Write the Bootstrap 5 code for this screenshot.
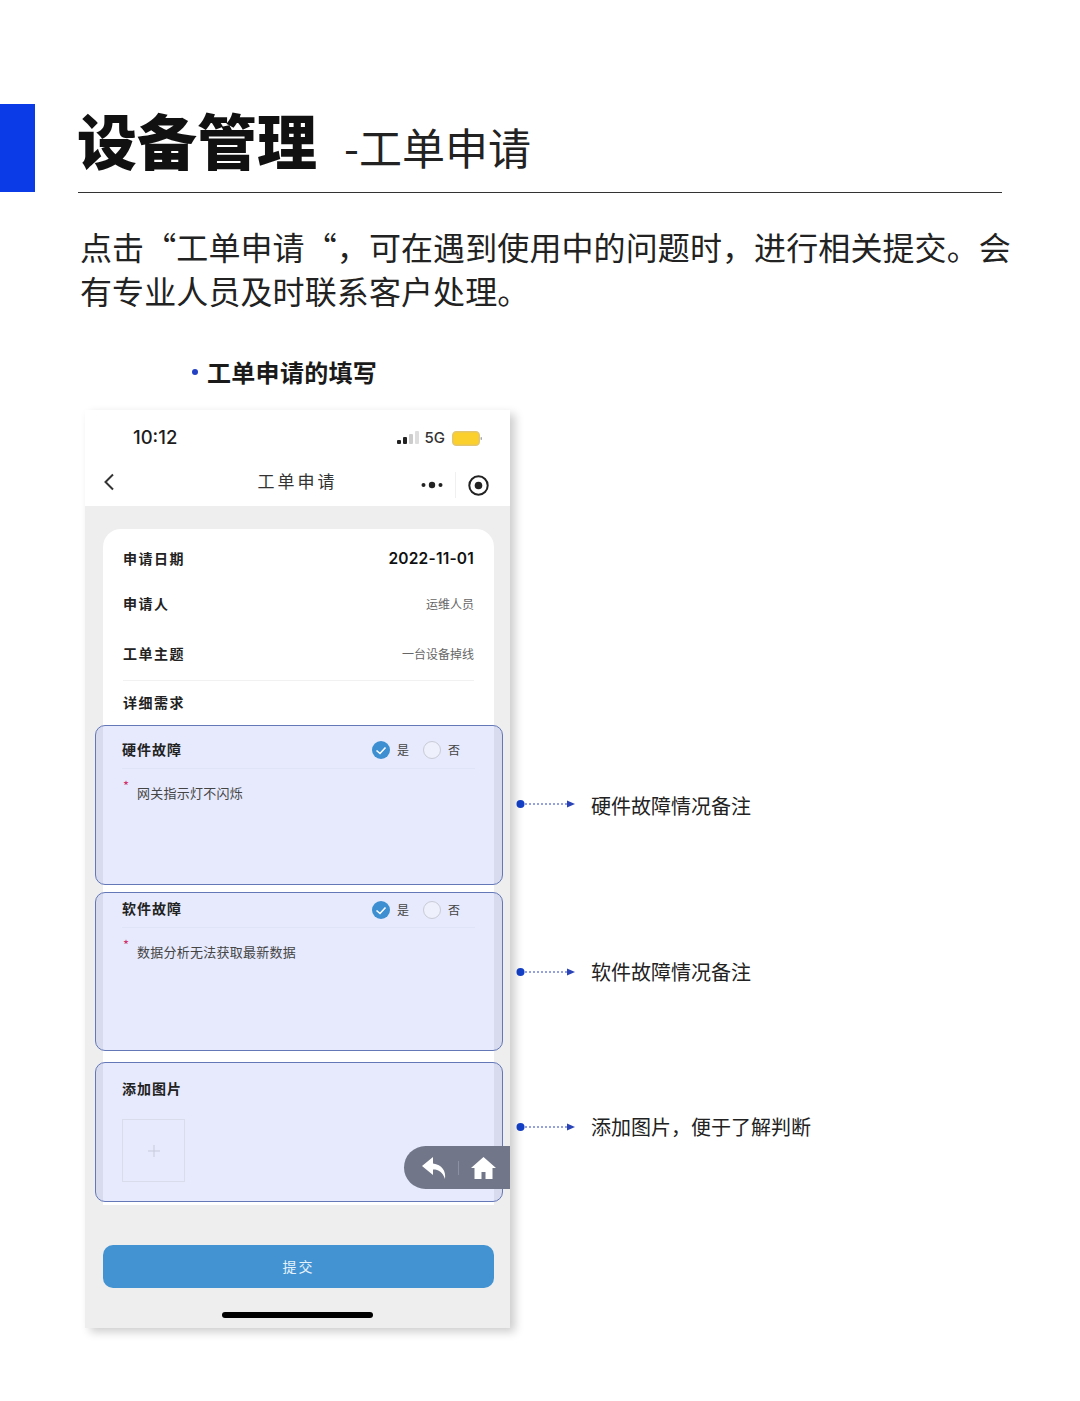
<!DOCTYPE html>
<html lang="zh-CN">
<head>
    <meta charset="UTF-8">
    <meta name="viewport" content="width=device-width, initial-scale=1.0">
    <title>设备管理 - 工单申请</title>
    <link href="https://cdn.jsdelivr.net/npm/bootstrap@5.3.0/dist/css/bootstrap.min.css" rel="stylesheet">
    <script src="https://cdn.jsdelivr.net/npm/bootstrap@5.3.0/dist/js/bootstrap.bundle.min.js"></script>
    <style>
        body { background: #fff; color: #1c1c1c; font-family: "Noto Sans CJK SC", "Liberation Sans", sans-serif; min-height: 1401px; }
        .slide { padding-top: 104px; padding-bottom: 73px; }
        .side-bar { width: 35px; height: 88px; background: #0a3be6; flex: none; }
        .title-row { width: 924px; margin-left: 43px; height: 89px; border-bottom: 1px solid #333; line-height: 70px; }
        .title-main { font-size: 60px; font-weight: 900; color: #111; margin-left: -1px; margin-right: 27px; }
        .title-sub { font-size: 43px; color: #222; }
        .intro { margin: 31px 0 0 80px; font-size: 32px; letter-spacing: .1px; line-height: 44px; white-space: nowrap; color: #222; }
        .fill-head { margin: 42px 0 0 192px; height: 36px; font-size: 24px; font-weight: 700; letter-spacing: .3px; line-height: 36px; color: #1a1a1a; }
        .fill-dot { width: 6px; height: 6px; background: #2441c4; margin-right: 9px; }
        .main-row { margin: 20px 0 0 85px; }

        .phone { width: 425px; height: 918px; background: #eee; box-shadow: 5px 4px 9px rgba(0,0,0,.2); flex: none; }
        .phone-top { background: #fff; height: 96px; }
        .status-row { height: 56px; padding: 0 28px 0 48px; }
        .status-time { font-family: Inter, "Liberation Sans", sans-serif; font-size: 18.5px; font-weight: 500; }
        .status-net { font-family: Inter, "Liberation Sans", sans-serif; font-size: 15px; font-weight: 500; color: #333; margin: 0 7px 0 6px; }
        .nav-row { display: grid; grid-template-columns: 1fr auto 1fr; height: 40px; }
        .nav-back { padding: 7px 0 0 18px; }
        .nav-title { font-size: 17px; line-height: 30px; letter-spacing: 3px; color: #333; }
        .nav-tools { padding: 0 21px 2px 0; }
        .nav-sep { width: 1px; height: 26px; background: #f0f0f0; margin: 0 12px; }

        .form-sheet { margin: 23px 16px 0 18px; background: #fff; border-radius: 18px 18px 0 0; padding: 7px 20px 3px; }
        .sheet-row { font-size: 14px; font-weight: 700; letter-spacing: 1.5px; color: #222; }
        .row-date { height: 44px; }
        .row-person { height: 46px; }
        .row-topic { height: 55px; border-bottom: 1px solid #f1f1f1; }
        .row-detail { height: 44px; padding-bottom: 2px; }
        .sheet-date { font-family: Inter, "Liberation Sans", sans-serif; font-size: 15.5px; letter-spacing: .2px; font-weight: 600; color: #111; margin-top: 2px; }
        .sheet-value { font-size: 12px; font-weight: 400; letter-spacing: 0; color: #666; margin-top: 2px; }

        .mark-box { margin: 0 -29px 0 -28px; padding: 0 27px 0 26px; border: 1.5px solid #6478b8; border-radius: 10px; background: rgba(100,125,235,.16); }
        .box-one { height: 160px; margin-bottom: 7px; }
        .box-two { height: 159px; margin-bottom: 11px; }
        .box-three { height: 140px; }
        .box-head { border-bottom: 1px solid #dfe4f6; font-size: 14px; font-weight: 700; letter-spacing: 1px; color: #222; }
        .box-one .box-head { height: 43px; padding-top: 5px; }
        .box-two .box-head { height: 35px; padding-bottom: 3px; }
        .choice-group { padding-right: 15px; font-size: 12px; font-weight: 400; letter-spacing: 0; color: #444; }
        .box-two .choice-group { margin-top: 3px; }
        .choice-off { width: 18px; height: 18px; border: 1px solid #c9ccd6; background: #eef0fb; margin-left: 14px; }
        .choice-label { margin-left: 7px; }
        .note-line { padding: 12px 0 0 15px; font-size: 13px; letter-spacing: .25px; line-height: 24px; color: #444; }
        .note-star { left: 1px; top: 9px; color: #d0306a; font-size: 13px; line-height: 16px; }
        .pic-title { height: 56px; padding-top: 13px; font-size: 14px; font-weight: 700; letter-spacing: 1px; line-height: 24px; color: #222; }
        .pic-slot { width: 63px; height: 63px; border: 1px solid #d9dcea; }

        .submit-btn { margin: 40px 16px 0 18px; width: 391px; height: 43px; background: #4393d3; border-radius: 10px; color: #e6f2fb; font-size: 14px; letter-spacing: 2px; border: 0; }
        .home-bar { width: 151px; height: 6px; background: #000; margin: 24px auto 0; }
        .float-pill { right: 0; top: 736px; width: 106px; height: 43px; background: #717689; border-radius: 22px 0 0 22px; padding-left: 17px; }
        .pill-sep { width: 1px; height: 14px; background: #8b90a2; margin: 0 12px 0 11px; }

        .note-col { padding-top: 381px; padding-left: 6px; }
        .anno-row { height: 30px; font-size: 20px; line-height: 30px; color: #222; }
        .anno-row svg { margin-right: 16px; }
        .anno-one svg { margin-top: -5px; }
        .anno-two { margin-top: 136px; }
        .anno-three { margin-top: 125px; }
    </style>
</head>
<body>
    <div class="slide">
        <!-- Header -->
        <div class="d-flex">
            <div class="side-bar"></div>
            <div class="title-row d-flex align-items-baseline">
                <span class="title-main">设备管理</span>
                <span class="title-sub">-工单申请</span>
            </div>
        </div>
        <p class="intro">点击“工单申请“，可在遇到使用中的问题时，进行相关提交。会<br>有专业人员及时联系客户处理。</p>
        <div class="fill-head d-flex align-items-center">
            <span class="fill-dot rounded-circle"></span>工单申请的填写
        </div>

        <div class="main-row d-flex">
            <!-- Phone -->
            <div class="phone position-relative">
                <div class="phone-top">
                    <div class="status-row d-flex align-items-center justify-content-between">
                        <span class="status-time">10:12</span>
                        <span class="d-flex align-items-center">
                            <svg width="22" height="14" viewBox="0 0 22 14">
                                <rect x="0" y="9" width="4" height="4" rx="1" fill="#222"/>
                                <rect x="6" y="6" width="4" height="7" rx="1" fill="#222"/>
                                <rect x="12" y="3" width="4" height="10" rx="1" fill="#ccc"/>
                                <rect x="18" y="0" width="4" height="13" rx="1" fill="#ddd"/>
                            </svg>
                            <span class="status-net">5G</span>
                            <svg width="30" height="15" viewBox="0 0 30 15">
                                <rect x=".75" y=".75" width="26.5" height="13.5" rx="3.5" fill="#fbd02c" stroke="#e3c66f" stroke-width="1.5"/>
                                <rect x="28.5" y="6" width="1.5" height="3" rx=".7" fill="#aaa"/>
                            </svg>
                        </span>
                    </div>
                    <div class="nav-row">
                        <div class="nav-back">
                            <svg class="d-block" width="12" height="18" viewBox="0 0 12 18"><path d="M10 1.5 2.5 9l7.5 7.5" fill="none" stroke="#333" stroke-width="2"/></svg>
                        </div>
                        <div class="nav-title">工单申请</div>
                        <div class="nav-tools d-flex justify-content-end align-items-center">
                            <svg width="22" height="8" viewBox="0 0 22 8">
                                <circle cx="2.5" cy="4" r="2" fill="#222"/>
                                <circle cx="11" cy="4" r="3.2" fill="#222"/>
                                <circle cx="19.5" cy="4" r="2" fill="#222"/>
                            </svg>
                            <span class="nav-sep"></span>
                            <svg width="21" height="21" viewBox="0 0 21 21">
                                <circle cx="10.5" cy="10.5" r="9.2" fill="none" stroke="#222" stroke-width="2"/>
                                <circle cx="10.5" cy="10.5" r="3.8" fill="#222"/>
                            </svg>
                        </div>
                    </div>
                </div>

                <div class="form-sheet">
                    <div class="sheet-row row-date d-flex align-items-center justify-content-between">
                        <span>申请日期</span><span class="sheet-date">2022-11-01</span>
                    </div>
                    <div class="sheet-row row-person d-flex align-items-center justify-content-between">
                        <span>申请人</span><span class="sheet-value">运维人员</span>
                    </div>
                    <div class="sheet-row row-topic d-flex align-items-center justify-content-between">
                        <span>工单主题</span><span class="sheet-value">一台设备掉线</span>
                    </div>
                    <div class="sheet-row row-detail d-flex align-items-center">详细需求</div>

                    <div class="mark-box box-one">
                        <div class="box-head d-flex align-items-center justify-content-between">
                            <span>硬件故障</span>
                            <span class="choice-group d-flex align-items-center">
                                <svg width="18" height="18" viewBox="0 0 18 18"><circle cx="9" cy="9" r="9" fill="#3d8fd1"/><path d="M4.5 9.5 8 12.5l5.5-6" fill="none" stroke="#fff" stroke-width="1.6"/></svg>
                                <span class="choice-label">是</span>
                                <span class="choice-off rounded-circle"></span>
                                <span class="choice-label">否</span>
                            </span>
                        </div>
                        <div class="note-line position-relative"><span class="note-star position-absolute">*</span>网关指示灯不闪烁</div>
                    </div>

                    <div class="mark-box box-two">
                        <div class="box-head d-flex align-items-center justify-content-between">
                            <span>软件故障</span>
                            <span class="choice-group d-flex align-items-center">
                                <svg width="18" height="18" viewBox="0 0 18 18"><circle cx="9" cy="9" r="9" fill="#3d8fd1"/><path d="M4.5 9.5 8 12.5l5.5-6" fill="none" stroke="#fff" stroke-width="1.6"/></svg>
                                <span class="choice-label">是</span>
                                <span class="choice-off rounded-circle"></span>
                                <span class="choice-label">否</span>
                            </span>
                        </div>
                        <div class="note-line position-relative"><span class="note-star position-absolute">*</span>数据分析无法获取最新数据</div>
                    </div>

                    <div class="mark-box box-three">
                        <div class="pic-title">添加图片</div>
                        <div class="pic-slot d-flex align-items-center justify-content-center">
                            <svg width="12" height="12" viewBox="0 0 12 12"><path d="M6 0v12M0 6h12" stroke="#c6cadb" stroke-width="1"/></svg>
                        </div>
                    </div>
                </div>

                <button type="button" class="submit-btn d-block">提交</button>
                <div class="home-bar rounded-pill"></div>

                <!-- Floating capsule sits over the form -->
                <div class="float-pill position-absolute d-flex align-items-center">
                    <svg width="26" height="24" viewBox="0 0 26 24"><path d="M12 1 1 10l11 9v-5.5c6 0 9.5 2.5 12 9.5 1-8-3-14.5-12-15.5z" fill="#fff"/></svg>
                    <span class="pill-sep"></span>
                    <svg width="25" height="22" viewBox="0 0 25 22"><path d="M12.5 0 0 11h3.5v11h18V11H25z" fill="#fff"/><rect x="10.5" y="15" width="4" height="7" fill="#717689"/></svg>
                </div>
            </div>

            <!-- Callouts -->
            <div class="note-col">
                <div class="anno-row anno-one d-flex align-items-center">
                    <svg width="59" height="10" viewBox="0 0 59 10"><circle cx="4.5" cy="5" r="4" fill="#1440c8"/><path d="M9 5h43" stroke="#2a44b8" stroke-width="1" stroke-dasharray="2 2"/><path d="M51 1.5 59 5l-8 3.5z" fill="#2a44b8"/></svg>
                    <span>硬件故障情况备注</span>
                </div>
                <div class="anno-row anno-two d-flex align-items-center">
                    <svg width="59" height="10" viewBox="0 0 59 10"><circle cx="4.5" cy="5" r="4" fill="#1440c8"/><path d="M9 5h43" stroke="#2a44b8" stroke-width="1" stroke-dasharray="2 2"/><path d="M51 1.5 59 5l-8 3.5z" fill="#2a44b8"/></svg>
                    <span>软件故障情况备注</span>
                </div>
                <div class="anno-row anno-three d-flex align-items-center">
                    <svg width="59" height="10" viewBox="0 0 59 10"><circle cx="4.5" cy="5" r="4" fill="#1440c8"/><path d="M9 5h43" stroke="#2a44b8" stroke-width="1" stroke-dasharray="2 2"/><path d="M51 1.5 59 5l-8 3.5z" fill="#2a44b8"/></svg>
                    <span>添加图片，便于了解判断</span>
                </div>
            </div>
        </div>
    </div>
</body>
</html>
